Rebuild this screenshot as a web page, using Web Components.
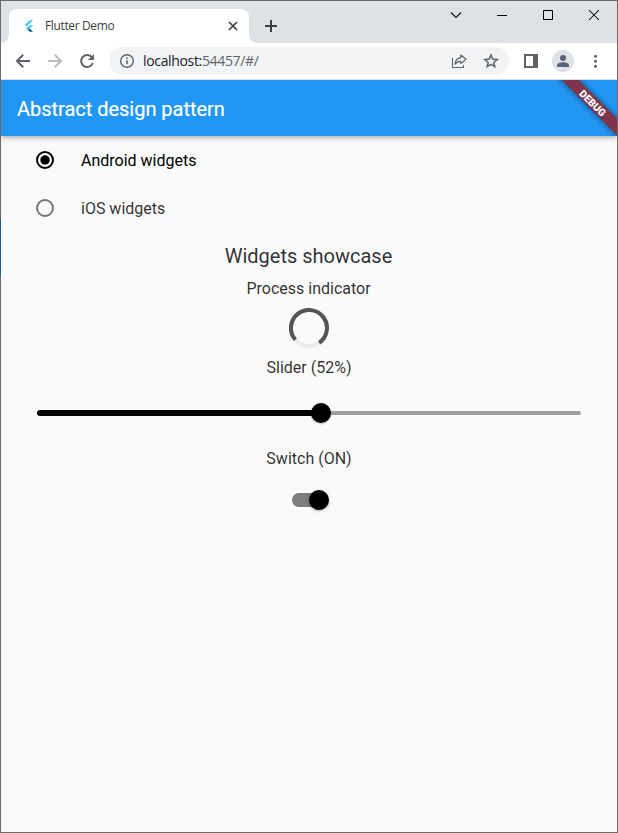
<!DOCTYPE html>
<html lang="en">
<head>
<meta charset="utf-8">
<title>Flutter Demo</title>
<style>
html,body{margin:0;height:100%;overflow:hidden}
body{font-family:Roboto,sans-serif}
</style>
</head>
<body>
<browser-window>
  <tab-strip slot="chrome">Flutter Demo</tab-strip>
  <tool-bar slot="chrome">localhost:<span>54457/#/</span></tool-bar>
  <app-bar>Abstract design pattern</app-bar>
  <radio-row checked>Android widgets</radio-row>
  <radio-row>iOS widgets</radio-row>
  <widget-showcase></widget-showcase>
</browser-window>
<script>
const define = (name, markup) => customElements.define(name, class extends HTMLElement {
  constructor() {
    super();
    this.attachShadow({mode: 'open'}).innerHTML = markup;
  }
});

define('browser-window', `<style>
:host{display:flex;flex-direction:column;box-sizing:border-box;width:618px;height:833px;border:1px solid #6b6b6c;border-left:0;position:relative;background:#fafafa;padding-left:1px;overflow:hidden}
.edge{position:absolute;left:0;top:0;bottom:0;width:1px;background:linear-gradient(#6b6b6c 0 218px,#1f5687 218px 274px,#6b6b6c 274px)}
main{flex:1;display:flex;flex-direction:column;min-height:0;overflow:hidden}
</style><div class="edge"></div><slot name="chrome"></slot><main><slot></slot></main>`);

define('tab-strip', `<style>
:host{display:flex;height:42px;background:#dee1e6;box-sizing:border-box;padding:8px 0 0 8px;position:relative;flex:none}
.tab{box-sizing:border-box;width:240px;height:34px;background:#fff;border-radius:8px 8px 0 0;display:flex;align-items:center;padding:0 10px 0 13px;position:relative}
.tab:before,.tab:after{content:"";position:absolute;bottom:0;width:8px;height:8px}
.tab:before{left:-8px;background:radial-gradient(circle at 0 0,transparent 7.5px,#fff 8px)}
.tab:after{right:-8px;background:radial-gradient(circle at 100% 0,transparent 7.5px,#fff 8px)}
.title{font:12px/16px "Open Sans",sans-serif;letter-spacing:-.37px;color:#3c4043;margin-left:9px;flex:1;white-space:nowrap}
svg{display:block;flex:none}
.plus{margin:9px 0 0 14px}
.controls{display:flex;margin-left:auto;margin-top:-8px;height:28px;align-items:center}
.controls svg{width:46px;height:28px}
</style>
<div class="tab">
<svg width="14" height="14" viewBox="0 0 14 14"><path d="M7.8 1.2H11L4.6 7.6 2.9 6zM7.8 6.2H11L7.6 9.5 6 7.9z" fill="#45c5f6"/><path d="M4.3 9.5 6 7.8 7.7 9.5 6 11.2z" fill="#28b4ed"/><path d="M6 11.2 7.7 9.5 11 12.8H7.8z" fill="#09539b"/></svg>
<span class="title"><slot></slot></span>
<svg width="12" height="12" viewBox="0 0 12 12"><path d="M2 2 10 10M10 2 2 10" stroke="#3c4043" stroke-width="1.7"/></svg>
</div>
<svg class="plus" width="16" height="16" viewBox="0 0 16 16"><path d="M8 2V14M2 8H14" stroke="#3c4043" stroke-width="2"/></svg>
<div class="controls">
<svg viewBox="0 0 46 28"><path d="m18 11.5 5 5 5-5" fill="none" stroke="#111" stroke-width="1.1"/></svg>
<svg viewBox="0 0 46 28"><path d="M18 14.5h10" stroke="#000"/></svg>
<svg viewBox="0 0 46 28"><path d="M18.5 9.5h9v9h-9z" fill="none" stroke="#000"/></svg>
<svg viewBox="0 0 46 28"><path d="m18 9 10 10m0-10-10 10" stroke="#000" stroke-width="1.05"/></svg>
</div>`);

define('tool-bar', `<style>
:host{display:flex;height:37px;flex:none;box-sizing:border-box;background:#fff;border-bottom:1px solid #dadce0;align-items:center;padding:0 12px 0 14px;color:#202124}
svg{display:block;flex:none}
.nav{display:flex;gap:16px}
.address{box-sizing:border-box;width:400px;height:28px;border-radius:14px;background:#f1f3f4;margin-left:14px;display:flex;align-items:center;padding:0 10px}
.url{font:14px/20px "Open Sans",sans-serif;letter-spacing:-.34px;margin-left:8px;flex:1;white-space:nowrap}
::slotted(span){color:#5f6368}
.side{margin-left:14px}
.avatar{width:22px;height:22px;border-radius:50%;background:#dee1e6;margin-left:13px;display:flex;align-items:center;justify-content:center}
.more{margin-left:14px}
</style>
<div class="nav">
<svg width="16" height="16" viewBox="0 0 16 16"><path d="M15 8H2.5M8.2 1.8 2 8l6.2 6.2" fill="none" stroke="#5f6368" stroke-width="2"/></svg>
<svg width="16" height="16" viewBox="0 0 16 16"><path d="M1 8H13.5M7.8 1.8 14 8l-6.2 6.2" fill="none" stroke="#babcbe" stroke-width="2"/></svg>
<svg width="16" height="16" viewBox="0 0 16 16"><path d="M13 4.5A6 6 0 1 0 13.8 10" fill="none" stroke="#5f6368" stroke-width="2"/><path d="M15 1v6H9z" fill="#5f6368"/></svg>
</div>
<div class="address">
<svg width="16" height="16" viewBox="0 0 16 16"><circle cx="8" cy="8" r="6.3" fill="none" stroke="#5f6368" stroke-width="1.4"/><path d="M8 7.2v4.1M8 4.5v1.6" stroke="#5f6368" stroke-width="1.6"/></svg>
<span class="url"><slot></slot></span>
<svg width="16" height="16" viewBox="0 0 16 16"><path d="M1.5 5v9.5h11V12" fill="none" stroke="#5f6368" stroke-width="1.1"/><path d="M9.8 2 15 6.3l-5.2 4.3V8.4C7 8.3 5.4 9.1 4 11.3c.2-3.7 2.3-6.2 5.8-6.7z" fill="none" stroke="#5f6368" stroke-width="1.2" stroke-linejoin="round"/></svg>
<svg style="margin-left:16px" width="16" height="16" viewBox="0 0 16 16"><path d="m8 2 1.7 4.1 4.5.4-3.4 2.9 1 4.3L8 11.4l-3.8 2.3 1-4.3-3.4-2.9 4.5-.4z" fill="none" stroke="#5f6368" stroke-width="1.5"/></svg>
</div>
<svg class="side" width="16" height="16" viewBox="0 0 16 16"><path d="M1 1h14v14H1zM3 3v10h7V3z" fill="#5f6368" fill-rule="evenodd"/></svg>
<div class="avatar"><svg width="14" height="14" viewBox="0 0 14 14"><circle cx="7" cy="4" r="3" fill="#5a6378"/><path d="M1 13v-1.5C1 9.5 4 8.3 7 8.3s6 1.2 6 3.2V13z" fill="#5a6378"/></svg></div>
<svg class="more" width="16" height="16" viewBox="0 0 16 16"><g fill="#5f6368"><circle cx="7.5" cy="3.3" r="1.5"/><circle cx="7.5" cy="8.3" r="1.5"/><circle cx="7.5" cy="13.3" r="1.5"/></g></svg>`);

define('app-bar', `<style>
:host{display:flex;align-items:center;height:56px;flex:none;background:#2196f3;color:#fff;padding-left:16px;font:400 20px/24px Roboto,sans-serif;letter-spacing:-.02px;position:relative;box-shadow:0 2px 4px -1px rgba(0,0,0,.2),0 4px 5px rgba(0,0,0,.08),0 1px 6px rgba(0,0,0,.08)}
.title{padding-top:2px;-webkit-text-stroke:.2px #fff}
.corner{position:absolute;right:0;top:0;width:70px;height:56px;overflow:hidden}
.ribbon{position:absolute;width:120px;height:12px;left:-13.5px;top:17.5px;transform:rotate(45deg);background:#7d3549;box-shadow:0 0 6px rgba(0,0,0,.5);text-align:center;font:900 10.2px/13px Roboto,sans-serif;letter-spacing:0;color:#fff}
.ribbon span{margin-right:3px}
</style><span class="title"><slot></slot></span><div class="corner"><div class="ribbon"><span>DEBUG</span></div></div>`);

define('radio-row', `<style>
:host{display:flex;align-items:center;height:48px;flex:none;padding-left:34px;font:16px/19px Roboto,sans-serif;color:rgba(0,0,0,.82)}
:host([checked]){color:#000}
svg{display:block;margin-right:26px}
circle{fill:none;stroke:#757575;stroke-width:2}
.dot{stroke:none}
:host([checked]) circle{stroke:#000}
:host([checked]) .dot{fill:#000;stroke:none}
</style><svg width="20" height="20" viewBox="0 0 20 20"><circle cx="10" cy="10" r="8"/><circle class="dot" cx="10" cy="10" r="4.7"/></svg><slot></slot>`);

define('progress-ring', `<style>:host{display:block;width:40px;height:40px}svg{display:block}</style>
<svg width="40" height="40" viewBox="0 0 40 40" fill="none" stroke-width="4"><circle cx="20" cy="20" r="18" stroke="#ebebeb"/><path d="M6.3 31.7A18 18 0 1 1 30.2 34.8" stroke="#545454"/></svg>`);

define('value-slider', `<style>:host{display:flex;align-items:center;position:relative;width:544px;height:48px}
.active{width:284px;height:6px;border-radius:3px 0 0 3px;background:#000}
.rest{flex:1;height:4px;border-radius:0 2px 2px 0;background:#9e9e9e}
.thumb{position:absolute;left:274px;top:14px;width:20px;height:20px;border-radius:50%;background:#000;box-shadow:0 1px 2px rgba(0,0,0,.25)}
</style><div class="active"></div><div class="rest"></div><div class="thumb"></div>`);

define('toggle-switch', `<style>:host{display:block;position:relative;width:34px;height:14px;border-radius:7px;background:#7d7d7d}
.thumb{position:absolute;left:16.5px;top:-3px;width:20px;height:20px;border-radius:50%;background:#000;box-shadow:0 1px 3px rgba(0,0,0,.35)}
</style><div class="thumb"></div>`);

define('widget-showcase', `<style>
:host{display:flex;flex-direction:column;align-items:center;font:16px/20px Roboto,sans-serif;color:rgba(0,0,0,.82);padding-top:12px}
h2{font:20px/24px Roboto,sans-serif;margin:0 1px 11px 0}
.process{margin-right:1px}
progress-ring{margin:9px 0 10px}
value-slider{margin:11px 0 12px}
toggle-switch{margin:24px 0 0 0}
</style><h2>Widgets showcase</h2><span class="process">Process indicator</span><progress-ring></progress-ring><span>Slider (52%)</span><value-slider></value-slider><span>Switch (ON)</span><toggle-switch></toggle-switch>`);
</script>
</body>
</html>
